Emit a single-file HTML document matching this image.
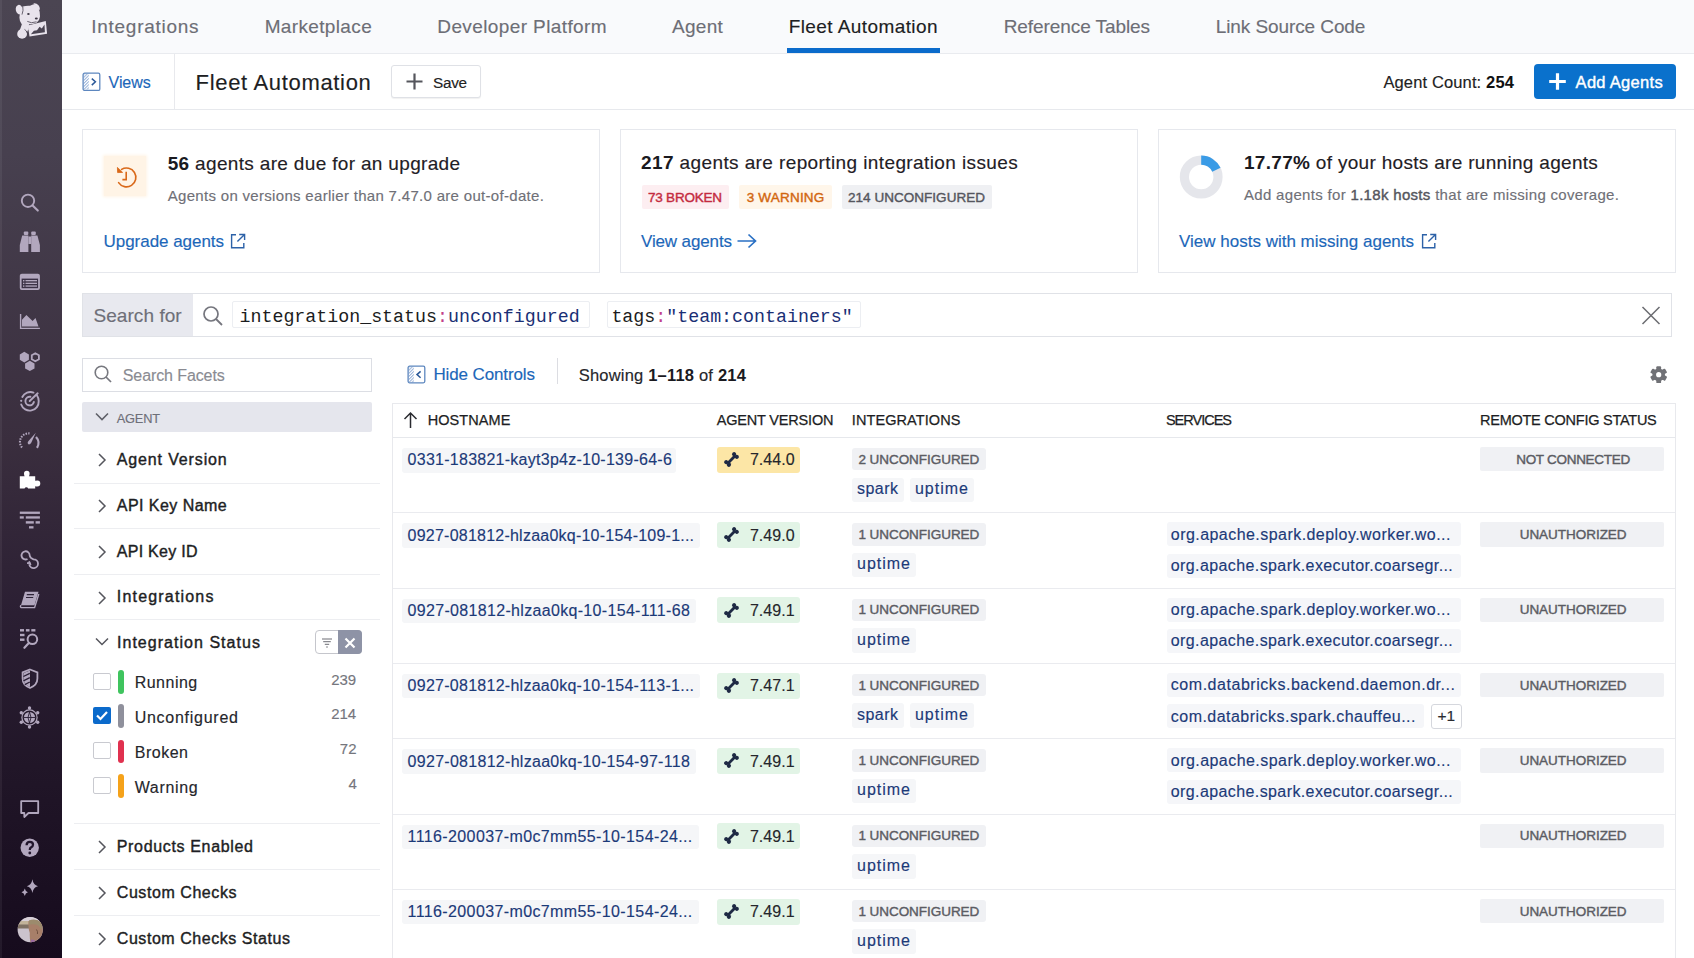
<!DOCTYPE html>
<html><head><meta charset="utf-8"><title>Fleet Automation</title>
<style>
html,body{margin:0;padding:0;width:1694px;height:958px;overflow:hidden;background:#fff;font-family:"Liberation Sans",sans-serif;}
.t{position:absolute;white-space:nowrap;}
.r{position:absolute;}
</style></head><body>
<div class="r" style="left:62px;top:0px;width:1632px;height:54px;background:#f9fafc;"></div>
<div class="r" style="left:62px;top:53px;width:1632px;height:1.5px;background:#e9ebef;"></div>
<div class="t" style="left:91.2px;top:13.92px;font-size:19px;line-height:25px;font-family:'Liberation Sans', sans-serif;letter-spacing:0.739px;font-weight:400;-webkit-text-stroke:0.15px #6d6e76;color:#6d6e76;">Integrations</div>
<div class="t" style="left:264.7px;top:13.92px;font-size:19px;line-height:25px;font-family:'Liberation Sans', sans-serif;letter-spacing:0.353px;font-weight:400;-webkit-text-stroke:0.15px #6d6e76;color:#6d6e76;">Marketplace</div>
<div class="t" style="left:437.3px;top:13.92px;font-size:19px;line-height:25px;font-family:'Liberation Sans', sans-serif;letter-spacing:0.394px;font-weight:400;-webkit-text-stroke:0.15px #6d6e76;color:#6d6e76;">Developer Platform</div>
<div class="t" style="left:671.9px;top:13.92px;font-size:19px;line-height:25px;font-family:'Liberation Sans', sans-serif;letter-spacing:0.340px;font-weight:400;-webkit-text-stroke:0.15px #6d6e76;color:#6d6e76;">Agent</div>
<div class="t" style="left:1003.7px;top:13.92px;font-size:19px;line-height:25px;font-family:'Liberation Sans', sans-serif;letter-spacing:-0.079px;font-weight:400;-webkit-text-stroke:0.15px #6d6e76;color:#6d6e76;">Reference Tables</div>
<div class="t" style="left:1215.7px;top:13.92px;font-size:19px;line-height:25px;font-family:'Liberation Sans', sans-serif;letter-spacing:-0.087px;font-weight:400;-webkit-text-stroke:0.15px #6d6e76;color:#6d6e76;">Link Source Code</div>
<div class="t" style="left:788.7px;top:13.92px;font-size:19px;line-height:25px;font-family:'Liberation Sans', sans-serif;letter-spacing:0.416px;font-weight:400;-webkit-text-stroke:0.15px #1d1e23;color:#1d1e23;">Fleet Automation</div>
<div class="r" style="left:787px;top:48px;width:153px;height:5px;background:#0b6bcb;"></div>
<div class="r" style="left:62px;top:54px;width:1632px;height:55px;background:#ffffff;"></div>
<div class="r" style="left:62px;top:108.5px;width:1632px;height:1.2px;background:#e7e9ed;"></div>
<div class="r" style="left:174px;top:54px;width:1px;height:55px;background:#e8e9ed;"></div>
<svg class="r" style="left:82px;top:72px" width="19" height="19" viewBox="0 0 19 19">
<defs><pattern id="hatch" width="2.2" height="2.2" patternUnits="userSpaceOnUse" patternTransform="rotate(45)"><rect width="1.1" height="2.2" fill="#9fb8dc"/></pattern></defs>
<rect x="1.6" y="1.6" width="5.2" height="15.8" fill="url(#hatch)"/>
<rect x="1.1" y="1.2" width="16.7" height="17.2" rx="1.5" fill="none" stroke="#5d87bf" stroke-width="1.3"/>
<path d="M9.8 6.6 L13.4 9.8 L9.8 13.1" fill="none" stroke="#2a5898" stroke-width="1.5"/></svg>
<div class="t" style="left:108.6px;top:71.96px;font-size:16px;line-height:21px;font-family:'Liberation Sans', sans-serif;letter-spacing:-0.080px;font-weight:400;-webkit-text-stroke:0.15px #1c67b9;color:#1c67b9;">Views</div>
<div class="t" style="left:195.6px;top:67.88px;font-size:22px;line-height:29px;font-family:'Liberation Sans', sans-serif;letter-spacing:0.675px;font-weight:400;-webkit-text-stroke:0.15px #1d1e23;color:#1d1e23;">Fleet Automation</div>
<div class="r" style="left:391px;top:64.5px;width:90px;height:33.5px;background:#fff;border:1px solid #dfe1e6;border-radius:3px;box-sizing:border-box;box-shadow:0 1px 1px rgba(0,0,0,0.06);"></div>
<svg class="r" style="left:405px;top:72px" width="19" height="19" viewBox="0 0 19 19">
<path d="M9.5 1.5 V17.5 M1.5 9.5 H17.5" stroke="#55565d" stroke-width="2.2"/></svg>
<div class="t" style="left:433.0px;top:72.70px;font-size:15.3px;line-height:20px;font-family:'Liberation Sans', sans-serif;letter-spacing:-0.286px;font-weight:400;-webkit-text-stroke:0.15px #222;color:#222;">Save</div>
<div class="t" style="left:1383.4px;top:71.78px;font-size:16.5px;line-height:21px;font-family:'Liberation Sans', sans-serif;letter-spacing:0.136px;"><span style="font-weight:400;-webkit-text-stroke:0.15px #222;color:#222">Agent Count: </span><span style="font-weight:700;color:#111">254</span></div>
<div class="r" style="left:1534px;top:64.3px;width:142px;height:34.3px;background:#0a71cc;border-radius:4px;"></div>
<svg class="r" style="left:1548px;top:72px" width="19" height="19" viewBox="0 0 19 19">
<path d="M9.5 1.2 V17.8 M1.2 9.5 H17.8" stroke="#fff" stroke-width="3.2"/></svg>
<div class="t" style="left:1575.6px;top:71.78px;font-size:16.5px;line-height:21px;font-family:'Liberation Sans', sans-serif;letter-spacing:0.293px;font-weight:400;-webkit-text-stroke:0.4px #ffffff;color:#ffffff;">Add Agents</div>
<div class="r" style="left:82px;top:128.5px;width:518px;height:144px;background:#fff;border:1px solid #e6e8ed;box-sizing:border-box;"></div>
<div class="r" style="left:620px;top:128.5px;width:518px;height:144px;background:#fff;border:1px solid #e6e8ed;box-sizing:border-box;"></div>
<div class="r" style="left:1158px;top:128.5px;width:518px;height:144px;background:#fff;border:1px solid #e6e8ed;box-sizing:border-box;"></div>
<div class="r" style="left:104px;top:156px;width:42px;height:40px;background:#fff4e6;box-shadow:0 0 3px 1px #fff4e6;"></div>
<svg class="r" style="left:112px;top:164px" width="26" height="26" viewBox="0 0 26 26">
<path d="M6.6 18.6 A9.4 9.4 0 1 0 9.6 5.4" fill="none" stroke="#d9691a" stroke-width="1.6" stroke-linecap="round"/>
<path d="M5.4 3.4 L10.6 8.4 L5.6 8.6 Z" fill="#d9691a" stroke="#d9691a" stroke-width="0.8" stroke-linejoin="round"/>
<path d="M14.2 7.8 V15.6 H10.4" fill="none" stroke="#d9691a" stroke-width="1.6"/></svg>
<div class="t" style="left:167.7px;top:150.92px;font-size:19px;line-height:25px;font-family:'Liberation Sans', sans-serif;letter-spacing:0.333px;"><span style="font-weight:700;color:#1a1a1f">56</span><span style="font-weight:400;-webkit-text-stroke:0.15px #1f2025;color:#1f2025"> agents are due for an upgrade</span></div>
<div class="t" style="left:167.7px;top:185.80px;font-size:15px;line-height:20px;font-family:'Liberation Sans', sans-serif;letter-spacing:0.311px;font-weight:400;-webkit-text-stroke:0.15px #6f7077;color:#6f7077;">Agents on versions earlier than 7.47.0 are out-of-date.</div>
<div class="t" style="left:103.5px;top:230.91px;font-size:17px;line-height:22px;font-family:'Liberation Sans', sans-serif;letter-spacing:-0.035px;font-weight:400;-webkit-text-stroke:0.15px #1c67b9;color:#1c67b9;">Upgrade agents</div>
<svg class="r" style="left:229px;top:232px" width="18" height="18" viewBox="0 0 18 18">
<path d="M7 2.8 H2.6 V15.8 H14.8 V11" fill="none" stroke="#2d62a8" stroke-width="1.4"/>
<path d="M10.2 2.5 H15.6 V8 M15.3 2.8 L8.4 9.6" fill="none" stroke="#2d62a8" stroke-width="1.4"/></svg>
<div class="t" style="left:641.0px;top:149.92px;font-size:19px;line-height:25px;font-family:'Liberation Sans', sans-serif;letter-spacing:0.395px;"><span style="font-weight:700;color:#1a1a1f">217</span><span style="font-weight:400;-webkit-text-stroke:0.15px #1f2025;color:#1f2025"> agents are reporting integration issues</span></div>
<div class="r" style="left:641.8px;top:185px;width:87px;height:24px;background:#fdeef1;border-radius:2px;"></div>
<div class="t" style="left:648.0px;top:188.82px;font-size:13.5px;line-height:18px;font-family:'Liberation Sans', sans-serif;letter-spacing:-0.223px;font-weight:400;-webkit-text-stroke:0.4px #c42a3f;color:#c42a3f;">73 BROKEN</div>
<div class="r" style="left:738.8px;top:185px;width:93px;height:24px;background:#fff6ea;border-radius:2px;"></div>
<div class="t" style="left:746.7px;top:188.82px;font-size:13.5px;line-height:18px;font-family:'Liberation Sans', sans-serif;letter-spacing:0.200px;font-weight:400;-webkit-text-stroke:0.4px #d2660f;color:#d2660f;">3 WARNING</div>
<div class="r" style="left:841.9px;top:185px;width:150px;height:24px;background:#eff0f3;border-radius:2px;"></div>
<div class="t" style="left:848.0px;top:188.82px;font-size:13.5px;line-height:18px;font-family:'Liberation Sans', sans-serif;letter-spacing:0.030px;font-weight:400;-webkit-text-stroke:0.4px #55565e;color:#55565e;">214 UNCONFIGURED</div>
<div class="t" style="left:641.0px;top:230.91px;font-size:17px;line-height:22px;font-family:'Liberation Sans', sans-serif;letter-spacing:-0.130px;font-weight:400;-webkit-text-stroke:0.15px #1c67b9;color:#1c67b9;">View agents</div>
<svg class="r" style="left:736px;top:232px" width="22" height="18" viewBox="0 0 22 18">
<path d="M1.5 9 H19.5 M12.5 2.5 L19.5 9 L12.5 15.5" fill="none" stroke="#2a70c4" stroke-width="1.7"/></svg>
<svg class="r" style="left:1177px;top:154px" width="48" height="48" viewBox="0 0 48 48">
<circle cx="24.2" cy="23" r="16.8" fill="none" stroke="#e5e6eb" stroke-width="9.2"/>
<path d="M24.2 6.2 A16.8 16.8 0 0 1 39.4 15.8" fill="none" stroke="#3a9be6" stroke-width="9.2"/></svg>
<div class="t" style="left:1244.0px;top:149.92px;font-size:19px;line-height:25px;font-family:'Liberation Sans', sans-serif;letter-spacing:0.306px;"><span style="font-weight:700;color:#1a1a1f">17.77%</span><span style="font-weight:400;-webkit-text-stroke:0.15px #1f2025;color:#1f2025"> of your hosts are running agents</span></div>
<div class="t" style="left:1244.0px;top:185.30px;font-size:15px;line-height:20px;font-family:'Liberation Sans', sans-serif;letter-spacing:0.315px;"><span style="font-weight:400;-webkit-text-stroke:0.15px #6f7077;color:#6f7077">Add agents for </span><span style="font-weight:400;-webkit-text-stroke:0.4px #55565d;color:#55565d">1.18k hosts</span><span style="font-weight:400;-webkit-text-stroke:0.15px #6f7077;color:#6f7077"> that are missing coverage.</span></div>
<div class="t" style="left:1179.0px;top:230.91px;font-size:17px;line-height:22px;font-family:'Liberation Sans', sans-serif;letter-spacing:0.002px;font-weight:400;-webkit-text-stroke:0.15px #1c67b9;color:#1c67b9;">View hosts with missing agents</div>
<svg class="r" style="left:1420px;top:232px" width="18" height="18" viewBox="0 0 18 18">
<path d="M7 2.8 H2.6 V15.8 H14.8 V11" fill="none" stroke="#2d62a8" stroke-width="1.4"/>
<path d="M10.2 2.5 H15.6 V8 M15.3 2.8 L8.4 9.6" fill="none" stroke="#2d62a8" stroke-width="1.4"/></svg>
<div class="r" style="left:82px;top:293px;width:1590px;height:44px;background:#fff;border:1px solid #e0e2e7;box-sizing:border-box;"></div>
<div class="r" style="left:83px;top:294px;width:110px;height:42px;background:#e8e9ef;"></div>
<div class="t" style="left:93.4px;top:302.92px;font-size:19px;line-height:25px;font-family:'Liberation Sans', sans-serif;letter-spacing:0.073px;font-weight:400;-webkit-text-stroke:0.15px #6e6f78;color:#6e6f78;">Search for</div>
<svg class="r" style="left:201px;top:304px" width="24" height="24" viewBox="0 0 24 24">
<circle cx="10" cy="10" r="7" fill="none" stroke="#75767e" stroke-width="1.7"/>
<path d="M15 15 L21 21" stroke="#75767e" stroke-width="1.8"/></svg>
<div class="r" style="left:232px;top:301px;width:358px;height:27px;background:#fff;border:1px solid #eceef2;box-sizing:border-box;border-radius:2px;"></div>
<div class="r" style="left:607px;top:301px;width:254px;height:27px;background:#fff;border:1px solid #eceef2;box-sizing:border-box;border-radius:2px;"></div>
<div class="t" style="left:239.5px;top:305.12px;font-size:18.3px;line-height:24px;font-family:'Liberation Mono', monospace;letter-spacing:0.000px;"><span style="font-weight:400;color:#1b1c20">integration_status</span><span style="font-weight:400;color:#c2408a">:</span><span style="font-weight:400;color:#1a2f75">unconfigured</span></div>
<div class="t" style="left:611.4px;top:305.12px;font-size:18.3px;line-height:24px;font-family:'Liberation Mono', monospace;letter-spacing:0.000px;"><span style="font-weight:400;color:#1b1c20">tags</span><span style="font-weight:400;color:#c2408a">:</span><span style="font-weight:400;color:#1a2f75">"team:containers"</span></div>
<svg class="r" style="left:1640px;top:305px" width="21" height="21" viewBox="0 0 21 21">
<path d="M2.5 2 L19.5 19 M19.5 2 L2.5 19" stroke="#6a6b70" stroke-width="1.5"/></svg>
<div class="r" style="left:82px;top:357.5px;width:290px;height:34px;background:#fff;border:1px solid #dcdee4;box-sizing:border-box;"></div>
<svg class="r" style="left:93px;top:364px" width="20" height="20" viewBox="0 0 20 20">
<circle cx="8.5" cy="8.5" r="6.3" fill="none" stroke="#77787f" stroke-width="1.6"/>
<path d="M13 13 L18 18" stroke="#77787f" stroke-width="1.7"/></svg>
<div class="t" style="left:122.8px;top:365.46px;font-size:16px;line-height:21px;font-family:'Liberation Sans', sans-serif;letter-spacing:-0.102px;font-weight:400;-webkit-text-stroke:0.15px #8a8b92;color:#8a8b92;">Search Facets</div>
<div class="r" style="left:82px;top:402px;width:290px;height:30px;background:#e5e6ed;border-radius:2px;"></div>
<svg class="r" style="left:94px;top:410px" width="16" height="14" viewBox="0 0 16 14">
<path d="M2 3.5 L8 9.5 L14 3.5" fill="none" stroke="#5f6068" stroke-width="1.6"/></svg>
<div class="t" style="left:116.8px;top:409.56px;font-size:12.8px;line-height:17px;font-family:'Liberation Sans', sans-serif;letter-spacing:-0.216px;font-weight:400;-webkit-text-stroke:0.15px #6e6f78;color:#6e6f78;">AGENT</div>
<svg class="r" style="left:95px;top:452px" width="14" height="16" viewBox="0 0 14 16">
<path d="M4 2 L10 8 L4 14" fill="none" stroke="#55565d" stroke-width="1.5"/></svg>
<div class="t" style="left:116.8px;top:448.96px;font-size:16px;line-height:21px;font-family:'Liberation Sans', sans-serif;letter-spacing:0.858px;font-weight:400;-webkit-text-stroke:0.4px #1d1e23;color:#1d1e23;">Agent Version</div>
<svg class="r" style="left:95px;top:498.3px" width="14" height="16" viewBox="0 0 14 16">
<path d="M4 2 L10 8 L4 14" fill="none" stroke="#55565d" stroke-width="1.5"/></svg>
<div class="t" style="left:116.8px;top:495.26px;font-size:16px;line-height:21px;font-family:'Liberation Sans', sans-serif;letter-spacing:0.456px;font-weight:400;-webkit-text-stroke:0.4px #1d1e23;color:#1d1e23;">API Key Name</div>
<svg class="r" style="left:95px;top:544px" width="14" height="16" viewBox="0 0 14 16">
<path d="M4 2 L10 8 L4 14" fill="none" stroke="#55565d" stroke-width="1.5"/></svg>
<div class="t" style="left:116.8px;top:540.96px;font-size:16px;line-height:21px;font-family:'Liberation Sans', sans-serif;letter-spacing:0.267px;font-weight:400;-webkit-text-stroke:0.4px #1d1e23;color:#1d1e23;">API Key ID</div>
<svg class="r" style="left:95px;top:589.5px" width="14" height="16" viewBox="0 0 14 16">
<path d="M4 2 L10 8 L4 14" fill="none" stroke="#55565d" stroke-width="1.5"/></svg>
<div class="t" style="left:116.8px;top:586.46px;font-size:16px;line-height:21px;font-family:'Liberation Sans', sans-serif;letter-spacing:1.183px;font-weight:400;-webkit-text-stroke:0.4px #1d1e23;color:#1d1e23;">Integrations</div>
<div class="r" style="left:74px;top:482.7px;width:306px;height:1px;background:#edeef1;"></div>
<div class="r" style="left:74px;top:528px;width:306px;height:1px;background:#edeef1;"></div>
<div class="r" style="left:74px;top:573.5px;width:306px;height:1px;background:#edeef1;"></div>
<div class="r" style="left:74px;top:619.4px;width:306px;height:1px;background:#edeef1;"></div>
<svg class="r" style="left:94px;top:635px" width="16" height="14" viewBox="0 0 16 14">
<path d="M2 3.5 L8 9.5 L14 3.5" fill="none" stroke="#55565d" stroke-width="1.5"/></svg>
<div class="t" style="left:117.0px;top:632.16px;font-size:16px;line-height:21px;font-family:'Liberation Sans', sans-serif;letter-spacing:1.028px;font-weight:400;-webkit-text-stroke:0.4px #1d1e23;color:#1d1e23;">Integration Status</div>
<div class="r" style="left:315px;top:629.8px;width:47px;height:24.5px;background:#fff;border:1px solid #c5c6cc;border-radius:4px;box-sizing:border-box;"></div>
<div class="r" style="left:338px;top:629.8px;width:24px;height:24.5px;background:#8e93a6;border-radius:0 4px 4px 0;"></div>
<svg class="r" style="left:320px;top:635px" width="14" height="14" viewBox="0 0 14 14">
<path d="M2 4 H12 M3.2 6.7 H10.8 M4.8 9.3 H9.2 M6.2 12 H7.8" stroke="#6c6d74" stroke-width="1"/></svg>
<svg class="r" style="left:342px;top:634.5px" width="16" height="16" viewBox="0 0 16 16">
<path d="M3.5 3.5 L12.5 12.5 M12.5 3.5 L3.5 12.5" stroke="#fff" stroke-width="2.2"/></svg>
<div class="r" style="left:93px;top:672.5999999999999px;width:17.5px;height:17px;background:#fff;border:1.5px solid #c9cad0;border-radius:2px;box-sizing:border-box;"></div>
<div class="r" style="left:118.4px;top:670.0px;width:5.5px;height:23.5px;background:#3fc45e;border-radius:3px;"></div>
<div class="t" style="left:134.7px;top:672.26px;font-size:16px;line-height:21px;font-family:'Liberation Sans', sans-serif;letter-spacing:0.491px;font-weight:400;-webkit-text-stroke:0.15px #25262b;color:#25262b;">Running</div>
<div class="t" style="left:331.2px;top:669.90px;font-size:15px;line-height:20px;font-family:'Liberation Sans', sans-serif;letter-spacing:0.000px;font-weight:400;-webkit-text-stroke:0.15px #75767d;color:#75767d;">239</div>
<div class="r" style="left:93px;top:707.0px;width:17.5px;height:17px;background:#0b6acb;border-radius:2px;"></div>
<svg class="r" style="left:93px;top:707.0px" width="18" height="17" viewBox="0 0 18 17">
<path d="M4 8.5 L7.5 12 L14 5" fill="none" stroke="#fff" stroke-width="2.2"/></svg>
<div class="r" style="left:118.4px;top:704.4000000000001px;width:5.5px;height:23.5px;background:#8f909c;border-radius:3px;"></div>
<div class="t" style="left:134.7px;top:706.66px;font-size:16px;line-height:21px;font-family:'Liberation Sans', sans-serif;letter-spacing:0.732px;font-weight:400;-webkit-text-stroke:0.15px #25262b;color:#25262b;">Unconfigured</div>
<div class="t" style="left:331.2px;top:704.30px;font-size:15px;line-height:20px;font-family:'Liberation Sans', sans-serif;letter-spacing:0.000px;font-weight:400;-webkit-text-stroke:0.15px #75767d;color:#75767d;">214</div>
<div class="r" style="left:93px;top:742.0999999999999px;width:17.5px;height:17px;background:#fff;border:1.5px solid #c9cad0;border-radius:2px;box-sizing:border-box;"></div>
<div class="r" style="left:118.4px;top:739.5px;width:5.5px;height:23.5px;background:#e0314f;border-radius:3px;"></div>
<div class="t" style="left:134.7px;top:741.76px;font-size:16px;line-height:21px;font-family:'Liberation Sans', sans-serif;letter-spacing:0.516px;font-weight:400;-webkit-text-stroke:0.15px #25262b;color:#25262b;">Broken</div>
<div class="t" style="left:339.8px;top:739.40px;font-size:15px;line-height:20px;font-family:'Liberation Sans', sans-serif;letter-spacing:0.000px;font-weight:400;-webkit-text-stroke:0.15px #75767d;color:#75767d;">72</div>
<div class="r" style="left:93px;top:776.9px;width:17.5px;height:17px;background:#fff;border:1.5px solid #c9cad0;border-radius:2px;box-sizing:border-box;"></div>
<div class="r" style="left:118.4px;top:774.3000000000001px;width:5.5px;height:23.5px;background:#f5a21a;border-radius:3px;"></div>
<div class="t" style="left:134.7px;top:776.56px;font-size:16px;line-height:21px;font-family:'Liberation Sans', sans-serif;letter-spacing:0.661px;font-weight:400;-webkit-text-stroke:0.15px #25262b;color:#25262b;">Warning</div>
<div class="t" style="left:348.4px;top:774.20px;font-size:15px;line-height:20px;font-family:'Liberation Sans', sans-serif;letter-spacing:0.000px;font-weight:400;-webkit-text-stroke:0.15px #75767d;color:#75767d;">4</div>
<div class="r" style="left:74px;top:823.4px;width:306px;height:1px;background:#edeef1;"></div>
<div class="r" style="left:74px;top:869.2px;width:306px;height:1px;background:#edeef1;"></div>
<div class="r" style="left:74px;top:915.3px;width:306px;height:1px;background:#edeef1;"></div>
<svg class="r" style="left:95px;top:839.2px" width="14" height="16" viewBox="0 0 14 16">
<path d="M4 2 L10 8 L4 14" fill="none" stroke="#55565d" stroke-width="1.5"/></svg>
<div class="t" style="left:116.8px;top:836.16px;font-size:16px;line-height:21px;font-family:'Liberation Sans', sans-serif;letter-spacing:0.654px;font-weight:400;-webkit-text-stroke:0.4px #1d1e23;color:#1d1e23;">Products Enabled</div>
<svg class="r" style="left:95px;top:884.8px" width="14" height="16" viewBox="0 0 14 16">
<path d="M4 2 L10 8 L4 14" fill="none" stroke="#55565d" stroke-width="1.5"/></svg>
<div class="t" style="left:116.8px;top:881.76px;font-size:16px;line-height:21px;font-family:'Liberation Sans', sans-serif;letter-spacing:0.560px;font-weight:400;-webkit-text-stroke:0.4px #1d1e23;color:#1d1e23;">Custom Checks</div>
<svg class="r" style="left:95px;top:930.8px" width="14" height="16" viewBox="0 0 14 16">
<path d="M4 2 L10 8 L4 14" fill="none" stroke="#55565d" stroke-width="1.5"/></svg>
<div class="t" style="left:116.8px;top:927.76px;font-size:16px;line-height:21px;font-family:'Liberation Sans', sans-serif;letter-spacing:0.546px;font-weight:400;-webkit-text-stroke:0.4px #1d1e23;color:#1d1e23;">Custom Checks Status</div>
<svg class="r" style="left:406.5px;top:365px" width="19" height="19" viewBox="0 0 19 19">
<rect x="1.6" y="1.6" width="5.2" height="15.8" fill="url(#hatch)"/>
<rect x="1.1" y="1.2" width="16.7" height="16.6" rx="1.5" fill="none" stroke="#5d87bf" stroke-width="1.3"/>
<path d="M13.6 6.4 L10 9.6 L13.6 12.8" fill="none" stroke="#2a5898" stroke-width="1.5"/></svg>
<div class="t" style="left:433.4px;top:364.11px;font-size:17px;line-height:22px;font-family:'Liberation Sans', sans-serif;letter-spacing:-0.115px;font-weight:400;-webkit-text-stroke:0.15px #1c67b9;color:#1c67b9;">Hide Controls</div>
<div class="r" style="left:557px;top:358px;width:1px;height:26px;background:#dcdde2;"></div>
<div class="t" style="left:578.7px;top:364.58px;font-size:16.5px;line-height:21px;font-family:'Liberation Sans', sans-serif;letter-spacing:0.203px;"><span style="font-weight:400;-webkit-text-stroke:0.15px #25262b;color:#25262b">Showing </span><span style="font-weight:700;color:#1a1a1f">1–118</span><span style="font-weight:400;-webkit-text-stroke:0.15px #25262b;color:#25262b"> of </span><span style="font-weight:700;color:#1a1a1f">214</span></div>
<svg class="r" style="left:1650px;top:365.8px" width="17.4" height="17.4" viewBox="0 0 17.4 17.4">
<g fill="#707176"><rect x="6.3" y="0.2" width="4.8" height="17" rx="1" transform="rotate(0 8.7 8.7)"/><rect x="6.3" y="0.2" width="4.8" height="17" rx="1" transform="rotate(60 8.7 8.7)"/><rect x="6.3" y="0.2" width="4.8" height="17" rx="1" transform="rotate(120 8.7 8.7)"/><circle cx="8.7" cy="8.7" r="6.3"/></g><circle cx="8.7" cy="8.7" r="2.6" fill="#fff"/></svg>
<div class="r" style="left:392px;top:402.5px;width:1283.5px;height:556px;background:#fff;border:1px solid #e8e9ed;border-bottom:none;box-sizing:border-box;"></div>
<div class="r" style="left:393px;top:437px;width:1282px;height:1px;background:#e6e8ec;"></div>
<svg class="r" style="left:402px;top:411px" width="17" height="18" viewBox="0 0 17 18">
<path d="M8.5 2 V17 M2.5 8 L8.5 2 L14.5 8" fill="none" stroke="#2a2b30" stroke-width="1.5"/></svg>
<div class="t" style="left:427.7px;top:410.98px;font-size:14.5px;line-height:19px;font-family:'Liberation Sans', sans-serif;letter-spacing:0.075px;font-weight:400;-webkit-text-stroke:0.25px #1d1e23;color:#1d1e23;">HOSTNAME</div>
<div class="t" style="left:716.7px;top:410.98px;font-size:14.5px;line-height:19px;font-family:'Liberation Sans', sans-serif;letter-spacing:-0.182px;font-weight:400;-webkit-text-stroke:0.25px #1d1e23;color:#1d1e23;">AGENT VERSION</div>
<div class="t" style="left:851.8px;top:410.98px;font-size:14.5px;line-height:19px;font-family:'Liberation Sans', sans-serif;letter-spacing:0.083px;font-weight:400;-webkit-text-stroke:0.25px #1d1e23;color:#1d1e23;">INTEGRATIONS</div>
<div class="t" style="left:1165.9px;top:410.98px;font-size:14.5px;line-height:19px;font-family:'Liberation Sans', sans-serif;letter-spacing:-0.995px;font-weight:400;-webkit-text-stroke:0.25px #1d1e23;color:#1d1e23;">SERVICES</div>
<div class="t" style="left:1480.0px;top:410.98px;font-size:14.5px;line-height:19px;font-family:'Liberation Sans', sans-serif;letter-spacing:-0.249px;font-weight:400;-webkit-text-stroke:0.25px #1d1e23;color:#1d1e23;">REMOTE CONFIG STATUS</div>
<div class="r" style="left:401.9px;top:448.0px;width:274.30000000000007px;height:24.5px;background:#f5f6f8;border-radius:3px;"></div>
<div class="t" style="left:407.6px;top:449.26px;font-size:16px;line-height:21px;font-family:'Liberation Sans', sans-serif;letter-spacing:0.259px;font-weight:400;-webkit-text-stroke:0.15px #1c3a78;color:#1c3a78;">0331-183821-kayt3p4z-10-139-64-6</div>
<div class="r" style="left:716.7px;top:446.8px;width:83.3px;height:26px;background:#fce6a6;border-radius:3px;"></div>
<svg class="r" style="left:721.5px;top:450.0px" width="19" height="19" viewBox="0 0 19 19">
<g transform="rotate(-45 9.5 9.5)" fill="#1e2944"><rect x="4" y="8.1" width="11" height="2.8"/>
<circle cx="3.9" cy="7.6" r="2.1"/><circle cx="3.9" cy="11.4" r="2.1"/>
<circle cx="15.1" cy="7.6" r="2.1"/><circle cx="15.1" cy="11.4" r="2.1"/></g></svg>
<div class="t" style="left:749.9px;top:449.46px;font-size:16px;line-height:21px;font-family:'Liberation Sans', sans-serif;letter-spacing:0.034px;font-weight:400;-webkit-text-stroke:0.15px #25262b;color:#25262b;">7.44.0</div>
<div class="r" style="left:852.3px;top:447.9px;width:133.4px;height:22.6px;background:#f0f1f4;border-radius:3px;"></div>
<div class="t" style="left:858.4px;top:450.82px;font-size:13.5px;line-height:18px;font-family:'Liberation Sans', sans-serif;letter-spacing:-0.047px;font-weight:400;-webkit-text-stroke:0.4px #5b5c63;color:#5b5c63;">2 UNCONFIGURED</div>
<div class="r" style="left:852.3px;top:477.5px;width:51.4px;height:24.5px;background:#f5f6f8;border-radius:3px;"></div>
<div class="t" style="left:857.1px;top:478.06px;font-size:16px;line-height:21px;font-family:'Liberation Sans', sans-serif;letter-spacing:0.440px;font-weight:400;-webkit-text-stroke:0.15px #1c3a78;color:#1c3a78;">spark</div>
<div class="r" style="left:910.1999999999999px;top:477.5px;width:63.4px;height:24.5px;background:#f5f6f8;border-radius:3px;"></div>
<div class="t" style="left:915.0px;top:478.06px;font-size:16px;line-height:21px;font-family:'Liberation Sans', sans-serif;letter-spacing:0.967px;font-weight:400;-webkit-text-stroke:0.15px #1c3a78;color:#1c3a78;">uptime</div>
<div class="r" style="left:1480.4px;top:446.9px;width:184px;height:24.6px;background:#f0f1f4;border-radius:2px;"></div>
<div class="t" style="left:1516.2px;top:450.82px;font-size:13.5px;line-height:18px;font-family:'Liberation Sans', sans-serif;letter-spacing:-0.292px;font-weight:400;-webkit-text-stroke:0.4px #5b5c63;color:#5b5c63;">NOT CONNECTED</div>
<div class="r" style="left:393px;top:512px;width:1282px;height:1px;background:#eaebef;"></div>
<div class="r" style="left:401.9px;top:523.33px;width:297.80000000000007px;height:24.5px;background:#f5f6f8;border-radius:3px;"></div>
<div class="t" style="left:407.6px;top:524.59px;font-size:16px;line-height:21px;font-family:'Liberation Sans', sans-serif;letter-spacing:0.230px;font-weight:400;-webkit-text-stroke:0.15px #1c3a78;color:#1c3a78;">0927-081812-hlzaa0kq-10-154-109-1...</div>
<div class="r" style="left:716.7px;top:522.13px;width:83.3px;height:26px;background:#e2f4e6;border-radius:3px;"></div>
<svg class="r" style="left:721.5px;top:525.33px" width="19" height="19" viewBox="0 0 19 19">
<g transform="rotate(-45 9.5 9.5)" fill="#1e2944"><rect x="4" y="8.1" width="11" height="2.8"/>
<circle cx="3.9" cy="7.6" r="2.1"/><circle cx="3.9" cy="11.4" r="2.1"/>
<circle cx="15.1" cy="7.6" r="2.1"/><circle cx="15.1" cy="11.4" r="2.1"/></g></svg>
<div class="t" style="left:749.9px;top:524.79px;font-size:16px;line-height:21px;font-family:'Liberation Sans', sans-serif;letter-spacing:0.034px;font-weight:400;-webkit-text-stroke:0.15px #25262b;color:#25262b;">7.49.0</div>
<div class="r" style="left:852.3px;top:523.23px;width:133.4px;height:22.6px;background:#f0f1f4;border-radius:3px;"></div>
<div class="t" style="left:858.4px;top:526.15px;font-size:13.5px;line-height:18px;font-family:'Liberation Sans', sans-serif;letter-spacing:-0.047px;font-weight:400;-webkit-text-stroke:0.4px #5b5c63;color:#5b5c63;">1 UNCONFIGURED</div>
<div class="r" style="left:852.3px;top:552.83px;width:63.4px;height:24.5px;background:#f5f6f8;border-radius:3px;"></div>
<div class="t" style="left:857.1px;top:553.39px;font-size:16px;line-height:21px;font-family:'Liberation Sans', sans-serif;letter-spacing:0.967px;font-weight:400;-webkit-text-stroke:0.15px #1c3a78;color:#1c3a78;">uptime</div>
<div class="r" style="left:1166.6px;top:522.4300000000001px;width:294.5px;height:23.8px;background:#f5f6f9;border-radius:3px;"></div>
<div class="t" style="left:1170.8px;top:523.79px;font-size:16px;line-height:21px;font-family:'Liberation Sans', sans-serif;letter-spacing:0.450px;font-weight:400;-webkit-text-stroke:0.15px #1c3a78;color:#1c3a78;">org.apache.spark.deploy.worker.wo...</div>
<div class="r" style="left:1166.6px;top:553.73px;width:294.5px;height:23.8px;background:#f5f6f9;border-radius:3px;"></div>
<div class="t" style="left:1170.8px;top:555.09px;font-size:16px;line-height:21px;font-family:'Liberation Sans', sans-serif;letter-spacing:0.397px;font-weight:400;-webkit-text-stroke:0.15px #1c3a78;color:#1c3a78;">org.apache.spark.executor.coarsegr...</div>
<div class="r" style="left:1480.4px;top:522.23px;width:184px;height:24.6px;background:#f0f1f4;border-radius:2px;"></div>
<div class="t" style="left:1519.7px;top:526.15px;font-size:13.5px;line-height:18px;font-family:'Liberation Sans', sans-serif;letter-spacing:-0.032px;font-weight:400;-webkit-text-stroke:0.4px #5b5c63;color:#5b5c63;">UNAUTHORIZED</div>
<div class="r" style="left:393px;top:588px;width:1282px;height:1px;background:#eaebef;"></div>
<div class="r" style="left:401.9px;top:598.66px;width:294.1px;height:24.5px;background:#f5f6f8;border-radius:3px;"></div>
<div class="t" style="left:407.6px;top:599.92px;font-size:16px;line-height:21px;font-family:'Liberation Sans', sans-serif;letter-spacing:0.321px;font-weight:400;-webkit-text-stroke:0.15px #1c3a78;color:#1c3a78;">0927-081812-hlzaa0kq-10-154-111-68</div>
<div class="r" style="left:716.7px;top:597.4599999999999px;width:83.3px;height:26px;background:#e2f4e6;border-radius:3px;"></div>
<svg class="r" style="left:721.5px;top:600.66px" width="19" height="19" viewBox="0 0 19 19">
<g transform="rotate(-45 9.5 9.5)" fill="#1e2944"><rect x="4" y="8.1" width="11" height="2.8"/>
<circle cx="3.9" cy="7.6" r="2.1"/><circle cx="3.9" cy="11.4" r="2.1"/>
<circle cx="15.1" cy="7.6" r="2.1"/><circle cx="15.1" cy="11.4" r="2.1"/></g></svg>
<div class="t" style="left:749.9px;top:600.12px;font-size:16px;line-height:21px;font-family:'Liberation Sans', sans-serif;letter-spacing:0.034px;font-weight:400;-webkit-text-stroke:0.15px #25262b;color:#25262b;">7.49.1</div>
<div class="r" style="left:852.3px;top:598.56px;width:133.4px;height:22.6px;background:#f0f1f4;border-radius:3px;"></div>
<div class="t" style="left:858.4px;top:601.48px;font-size:13.5px;line-height:18px;font-family:'Liberation Sans', sans-serif;letter-spacing:-0.047px;font-weight:400;-webkit-text-stroke:0.4px #5b5c63;color:#5b5c63;">1 UNCONFIGURED</div>
<div class="r" style="left:852.3px;top:628.16px;width:63.4px;height:24.5px;background:#f5f6f8;border-radius:3px;"></div>
<div class="t" style="left:857.1px;top:628.72px;font-size:16px;line-height:21px;font-family:'Liberation Sans', sans-serif;letter-spacing:0.967px;font-weight:400;-webkit-text-stroke:0.15px #1c3a78;color:#1c3a78;">uptime</div>
<div class="r" style="left:1166.6px;top:597.76px;width:294.5px;height:23.8px;background:#f5f6f9;border-radius:3px;"></div>
<div class="t" style="left:1170.8px;top:599.12px;font-size:16px;line-height:21px;font-family:'Liberation Sans', sans-serif;letter-spacing:0.450px;font-weight:400;-webkit-text-stroke:0.15px #1c3a78;color:#1c3a78;">org.apache.spark.deploy.worker.wo...</div>
<div class="r" style="left:1166.6px;top:629.06px;width:294.5px;height:23.8px;background:#f5f6f9;border-radius:3px;"></div>
<div class="t" style="left:1170.8px;top:630.42px;font-size:16px;line-height:21px;font-family:'Liberation Sans', sans-serif;letter-spacing:0.397px;font-weight:400;-webkit-text-stroke:0.15px #1c3a78;color:#1c3a78;">org.apache.spark.executor.coarsegr...</div>
<div class="r" style="left:1480.4px;top:597.56px;width:184px;height:24.6px;background:#f0f1f4;border-radius:2px;"></div>
<div class="t" style="left:1519.7px;top:601.48px;font-size:13.5px;line-height:18px;font-family:'Liberation Sans', sans-serif;letter-spacing:-0.032px;font-weight:400;-webkit-text-stroke:0.4px #5b5c63;color:#5b5c63;">UNAUTHORIZED</div>
<div class="r" style="left:393px;top:663px;width:1282px;height:1px;background:#eaebef;"></div>
<div class="r" style="left:401.9px;top:673.99px;width:297.80000000000007px;height:24.5px;background:#f5f6f8;border-radius:3px;"></div>
<div class="t" style="left:407.6px;top:675.25px;font-size:16px;line-height:21px;font-family:'Liberation Sans', sans-serif;letter-spacing:0.264px;font-weight:400;-webkit-text-stroke:0.15px #1c3a78;color:#1c3a78;">0927-081812-hlzaa0kq-10-154-113-1...</div>
<div class="r" style="left:716.7px;top:672.79px;width:83.3px;height:26px;background:#e2f4e6;border-radius:3px;"></div>
<svg class="r" style="left:721.5px;top:675.99px" width="19" height="19" viewBox="0 0 19 19">
<g transform="rotate(-45 9.5 9.5)" fill="#1e2944"><rect x="4" y="8.1" width="11" height="2.8"/>
<circle cx="3.9" cy="7.6" r="2.1"/><circle cx="3.9" cy="11.4" r="2.1"/>
<circle cx="15.1" cy="7.6" r="2.1"/><circle cx="15.1" cy="11.4" r="2.1"/></g></svg>
<div class="t" style="left:749.9px;top:675.45px;font-size:16px;line-height:21px;font-family:'Liberation Sans', sans-serif;letter-spacing:0.034px;font-weight:400;-webkit-text-stroke:0.15px #25262b;color:#25262b;">7.47.1</div>
<div class="r" style="left:852.3px;top:673.89px;width:133.4px;height:22.6px;background:#f0f1f4;border-radius:3px;"></div>
<div class="t" style="left:858.4px;top:676.81px;font-size:13.5px;line-height:18px;font-family:'Liberation Sans', sans-serif;letter-spacing:-0.047px;font-weight:400;-webkit-text-stroke:0.4px #5b5c63;color:#5b5c63;">1 UNCONFIGURED</div>
<div class="r" style="left:852.3px;top:703.49px;width:51.4px;height:24.5px;background:#f5f6f8;border-radius:3px;"></div>
<div class="t" style="left:857.1px;top:704.05px;font-size:16px;line-height:21px;font-family:'Liberation Sans', sans-serif;letter-spacing:0.440px;font-weight:400;-webkit-text-stroke:0.15px #1c3a78;color:#1c3a78;">spark</div>
<div class="r" style="left:910.1999999999999px;top:703.49px;width:63.4px;height:24.5px;background:#f5f6f8;border-radius:3px;"></div>
<div class="t" style="left:915.0px;top:704.05px;font-size:16px;line-height:21px;font-family:'Liberation Sans', sans-serif;letter-spacing:0.967px;font-weight:400;-webkit-text-stroke:0.15px #1c3a78;color:#1c3a78;">uptime</div>
<div class="r" style="left:1166.6px;top:673.09px;width:294.5px;height:23.8px;background:#f5f6f9;border-radius:3px;"></div>
<div class="t" style="left:1170.8px;top:674.45px;font-size:16px;line-height:21px;font-family:'Liberation Sans', sans-serif;letter-spacing:0.538px;font-weight:400;-webkit-text-stroke:0.15px #1c3a78;color:#1c3a78;">com.databricks.backend.daemon.dr...</div>
<div class="r" style="left:1166.6px;top:704.39px;width:257.70000000000005px;height:23.8px;background:#f5f6f9;border-radius:3px;"></div>
<div class="t" style="left:1170.8px;top:705.75px;font-size:16px;line-height:21px;font-family:'Liberation Sans', sans-serif;letter-spacing:0.470px;font-weight:400;-webkit-text-stroke:0.15px #1c3a78;color:#1c3a78;">com.databricks.spark.chauffeu...</div>
<div class="r" style="left:1430.6px;top:704.49px;width:31.6px;height:24.5px;background:#fff;border:1px solid #d5d7dd;border-radius:3px;box-sizing:border-box;"></div>
<div class="t" style="left:1437.5px;top:706.12px;font-size:15.5px;line-height:20px;font-family:'Liberation Sans', sans-serif;letter-spacing:-0.172px;font-weight:400;-webkit-text-stroke:0.15px #2a2b30;color:#2a2b30;">+1</div>
<div class="r" style="left:1480.4px;top:672.89px;width:184px;height:24.6px;background:#f0f1f4;border-radius:2px;"></div>
<div class="t" style="left:1519.7px;top:676.81px;font-size:13.5px;line-height:18px;font-family:'Liberation Sans', sans-serif;letter-spacing:-0.032px;font-weight:400;-webkit-text-stroke:0.4px #5b5c63;color:#5b5c63;">UNAUTHORIZED</div>
<div class="r" style="left:393px;top:738px;width:1282px;height:1px;background:#eaebef;"></div>
<div class="r" style="left:401.9px;top:749.3199999999999px;width:294.1px;height:24.5px;background:#f5f6f8;border-radius:3px;"></div>
<div class="t" style="left:407.6px;top:750.58px;font-size:16px;line-height:21px;font-family:'Liberation Sans', sans-serif;letter-spacing:0.285px;font-weight:400;-webkit-text-stroke:0.15px #1c3a78;color:#1c3a78;">0927-081812-hlzaa0kq-10-154-97-118</div>
<div class="r" style="left:716.7px;top:748.1199999999999px;width:83.3px;height:26px;background:#e2f4e6;border-radius:3px;"></div>
<svg class="r" style="left:721.5px;top:751.3199999999999px" width="19" height="19" viewBox="0 0 19 19">
<g transform="rotate(-45 9.5 9.5)" fill="#1e2944"><rect x="4" y="8.1" width="11" height="2.8"/>
<circle cx="3.9" cy="7.6" r="2.1"/><circle cx="3.9" cy="11.4" r="2.1"/>
<circle cx="15.1" cy="7.6" r="2.1"/><circle cx="15.1" cy="11.4" r="2.1"/></g></svg>
<div class="t" style="left:749.9px;top:750.78px;font-size:16px;line-height:21px;font-family:'Liberation Sans', sans-serif;letter-spacing:0.034px;font-weight:400;-webkit-text-stroke:0.15px #25262b;color:#25262b;">7.49.1</div>
<div class="r" style="left:852.3px;top:749.2199999999999px;width:133.4px;height:22.6px;background:#f0f1f4;border-radius:3px;"></div>
<div class="t" style="left:858.4px;top:752.14px;font-size:13.5px;line-height:18px;font-family:'Liberation Sans', sans-serif;letter-spacing:-0.047px;font-weight:400;-webkit-text-stroke:0.4px #5b5c63;color:#5b5c63;">1 UNCONFIGURED</div>
<div class="r" style="left:852.3px;top:778.8199999999999px;width:63.4px;height:24.5px;background:#f5f6f8;border-radius:3px;"></div>
<div class="t" style="left:857.1px;top:779.38px;font-size:16px;line-height:21px;font-family:'Liberation Sans', sans-serif;letter-spacing:0.967px;font-weight:400;-webkit-text-stroke:0.15px #1c3a78;color:#1c3a78;">uptime</div>
<div class="r" style="left:1166.6px;top:748.42px;width:294.5px;height:23.8px;background:#f5f6f9;border-radius:3px;"></div>
<div class="t" style="left:1170.8px;top:749.78px;font-size:16px;line-height:21px;font-family:'Liberation Sans', sans-serif;letter-spacing:0.450px;font-weight:400;-webkit-text-stroke:0.15px #1c3a78;color:#1c3a78;">org.apache.spark.deploy.worker.wo...</div>
<div class="r" style="left:1166.6px;top:779.7199999999999px;width:294.5px;height:23.8px;background:#f5f6f9;border-radius:3px;"></div>
<div class="t" style="left:1170.8px;top:781.08px;font-size:16px;line-height:21px;font-family:'Liberation Sans', sans-serif;letter-spacing:0.397px;font-weight:400;-webkit-text-stroke:0.15px #1c3a78;color:#1c3a78;">org.apache.spark.executor.coarsegr...</div>
<div class="r" style="left:1480.4px;top:748.2199999999999px;width:184px;height:24.6px;background:#f0f1f4;border-radius:2px;"></div>
<div class="t" style="left:1519.7px;top:752.14px;font-size:13.5px;line-height:18px;font-family:'Liberation Sans', sans-serif;letter-spacing:-0.032px;font-weight:400;-webkit-text-stroke:0.4px #5b5c63;color:#5b5c63;">UNAUTHORIZED</div>
<div class="r" style="left:393px;top:814px;width:1282px;height:1px;background:#eaebef;"></div>
<div class="r" style="left:401.9px;top:824.65px;width:297.1px;height:24.5px;background:#f5f6f8;border-radius:3px;"></div>
<div class="t" style="left:407.6px;top:825.91px;font-size:16px;line-height:21px;font-family:'Liberation Sans', sans-serif;letter-spacing:0.383px;font-weight:400;-webkit-text-stroke:0.15px #1c3a78;color:#1c3a78;">1116-200037-m0c7mm55-10-154-24...</div>
<div class="r" style="left:716.7px;top:823.4499999999999px;width:83.3px;height:26px;background:#e2f4e6;border-radius:3px;"></div>
<svg class="r" style="left:721.5px;top:826.65px" width="19" height="19" viewBox="0 0 19 19">
<g transform="rotate(-45 9.5 9.5)" fill="#1e2944"><rect x="4" y="8.1" width="11" height="2.8"/>
<circle cx="3.9" cy="7.6" r="2.1"/><circle cx="3.9" cy="11.4" r="2.1"/>
<circle cx="15.1" cy="7.6" r="2.1"/><circle cx="15.1" cy="11.4" r="2.1"/></g></svg>
<div class="t" style="left:749.9px;top:826.11px;font-size:16px;line-height:21px;font-family:'Liberation Sans', sans-serif;letter-spacing:0.034px;font-weight:400;-webkit-text-stroke:0.15px #25262b;color:#25262b;">7.49.1</div>
<div class="r" style="left:852.3px;top:824.55px;width:133.4px;height:22.6px;background:#f0f1f4;border-radius:3px;"></div>
<div class="t" style="left:858.4px;top:827.47px;font-size:13.5px;line-height:18px;font-family:'Liberation Sans', sans-serif;letter-spacing:-0.047px;font-weight:400;-webkit-text-stroke:0.4px #5b5c63;color:#5b5c63;">1 UNCONFIGURED</div>
<div class="r" style="left:852.3px;top:854.15px;width:63.4px;height:24.5px;background:#f5f6f8;border-radius:3px;"></div>
<div class="t" style="left:857.1px;top:854.71px;font-size:16px;line-height:21px;font-family:'Liberation Sans', sans-serif;letter-spacing:0.967px;font-weight:400;-webkit-text-stroke:0.15px #1c3a78;color:#1c3a78;">uptime</div>
<div class="r" style="left:1480.4px;top:823.55px;width:184px;height:24.6px;background:#f0f1f4;border-radius:2px;"></div>
<div class="t" style="left:1519.7px;top:827.47px;font-size:13.5px;line-height:18px;font-family:'Liberation Sans', sans-serif;letter-spacing:-0.032px;font-weight:400;-webkit-text-stroke:0.4px #5b5c63;color:#5b5c63;">UNAUTHORIZED</div>
<div class="r" style="left:393px;top:889px;width:1282px;height:1px;background:#eaebef;"></div>
<div class="r" style="left:401.9px;top:899.98px;width:297.1px;height:24.5px;background:#f5f6f8;border-radius:3px;"></div>
<div class="t" style="left:407.6px;top:901.24px;font-size:16px;line-height:21px;font-family:'Liberation Sans', sans-serif;letter-spacing:0.383px;font-weight:400;-webkit-text-stroke:0.15px #1c3a78;color:#1c3a78;">1116-200037-m0c7mm55-10-154-24...</div>
<div class="r" style="left:716.7px;top:898.78px;width:83.3px;height:26px;background:#e2f4e6;border-radius:3px;"></div>
<svg class="r" style="left:721.5px;top:901.98px" width="19" height="19" viewBox="0 0 19 19">
<g transform="rotate(-45 9.5 9.5)" fill="#1e2944"><rect x="4" y="8.1" width="11" height="2.8"/>
<circle cx="3.9" cy="7.6" r="2.1"/><circle cx="3.9" cy="11.4" r="2.1"/>
<circle cx="15.1" cy="7.6" r="2.1"/><circle cx="15.1" cy="11.4" r="2.1"/></g></svg>
<div class="t" style="left:749.9px;top:901.44px;font-size:16px;line-height:21px;font-family:'Liberation Sans', sans-serif;letter-spacing:0.034px;font-weight:400;-webkit-text-stroke:0.15px #25262b;color:#25262b;">7.49.1</div>
<div class="r" style="left:852.3px;top:899.88px;width:133.4px;height:22.6px;background:#f0f1f4;border-radius:3px;"></div>
<div class="t" style="left:858.4px;top:902.80px;font-size:13.5px;line-height:18px;font-family:'Liberation Sans', sans-serif;letter-spacing:-0.047px;font-weight:400;-webkit-text-stroke:0.4px #5b5c63;color:#5b5c63;">1 UNCONFIGURED</div>
<div class="r" style="left:852.3px;top:929.48px;width:63.4px;height:24.5px;background:#f5f6f8;border-radius:3px;"></div>
<div class="t" style="left:857.1px;top:930.04px;font-size:16px;line-height:21px;font-family:'Liberation Sans', sans-serif;letter-spacing:0.967px;font-weight:400;-webkit-text-stroke:0.15px #1c3a78;color:#1c3a78;">uptime</div>
<div class="r" style="left:1480.4px;top:898.88px;width:184px;height:24.6px;background:#f0f1f4;border-radius:2px;"></div>
<div class="t" style="left:1519.7px;top:902.80px;font-size:13.5px;line-height:18px;font-family:'Liberation Sans', sans-serif;letter-spacing:-0.032px;font-weight:400;-webkit-text-stroke:0.4px #5b5c63;color:#5b5c63;">UNAUTHORIZED</div>
<div class="r" style="left:0px;top:0px;width:62px;height:958px;background:linear-gradient(180deg,#4b4552 0%,#47404f 16%,#3a2e3e 46%,#2b1f33 64%,#211628 80%,#160b1d 100%);"></div>
<div class="r" style="left:0px;top:0px;width:1.5px;height:958px;background:rgba(255,255,255,0.06);"></div>
<svg class="r" style="left:0px;top:0px" width="62" height="45" viewBox="0 0 62 45">
<g fill="#e8e3ec">
<path d="M22.5 6.6 Q27 5.3 30 5.8 Q32.5 4.5 34 4.2 L38.5 8 Q40.2 12 40 16.5 Q39.6 20.8 36.6 22.8 Q33 24.5 29 24.2 L28.5 30 L24 30.5 Q23.8 27 22 24.8 Q19.4 21.8 19.4 17.5 Q19.4 15 20.5 13 Z"/>
<ellipse cx="19.3" cy="9.7" rx="3.5" ry="4.9" transform="rotate(-12 19.3 9.7)"/>
<path d="M33.4 3.4 Q36.5 3 38.5 5.2 Q40.3 7.3 40 9.8 Q38.6 9.6 37.6 8.4 Q35.5 6.6 33.4 3.4 Z"/>
<ellipse cx="22.1" cy="33.9" rx="4.9" ry="4.9"/>
<path d="M21.8 24.6 L28.6 26 L27.6 31.5 L19.5 31 Z"/>
</g>
<g fill="none" stroke="#4a4452" stroke-width="0.8">
<path d="M22.8 6.4 Q23.6 10.5 22 14.6"/>
<path d="M27.3 21.4 Q31 23.8 36.5 21.8"/>
<path d="M24.5 29.4 Q26.6 30.6 27.2 32.8"/>
</g>
<g fill="#3d3745"><ellipse cx="28.4" cy="14" rx="1.3" ry="1.1"/><ellipse cx="36.3" cy="18.6" rx="1.5" ry="1"/></g>
<path d="M27.8 25.4 L45.8 21.1 L47.1 33.8 L29.5 36.4 Z" fill="#e8e3ec"/>
<path d="M30.9 34.2 L33.9 30.7 L37 30.3 L39.6 26.8 L41.8 28.5 L44.5 24.6 L44.9 32.2 Z" fill="#4a4452"/>
</svg>
<svg class="r" style="left:0;top:0" width="62" height="958" viewBox="0 0 62 958">
<!-- search -->
<circle cx="28" cy="200.8" r="6.2" fill="none" stroke="#b2a7be" stroke-width="1.9"/>
<path d="M32.6 205.4 L37.8 210.6" stroke="#b2a7be" stroke-width="2.1" stroke-linecap="round"/>
<!-- binoculars -->
<g fill="#b2a7be">
<rect x="23.8" y="231.6" width="4.5" height="3.4" rx="1"/><rect x="31.2" y="231.6" width="4.6" height="3.4" rx="1"/>
<path d="M22.2 235.5 H28.4 V252 H19.8 V245 Z"/><path d="M31.2 235.5 H37.4 L39.9 245 V252 H31.2 Z"/>
<rect x="28.4" y="236.5" width="2.8" height="7.5"/>
</g>
<!-- list card -->
<rect x="19.8" y="273.8" width="20.1" height="16.1" rx="2" fill="#b2a7be"/>
<rect x="21.6" y="278.6" width="16.5" height="9.6" fill="#3b3146"/>
<g fill="#b2a7be"><rect x="23" y="280" width="1.4" height="1.4"/><rect x="23" y="282.7" width="1.4" height="1.4"/><rect x="23" y="285.4" width="1.4" height="1.4"/>
<rect x="25.5" y="280" width="11.5" height="1.3"/><rect x="25.5" y="282.7" width="11.5" height="1.3"/><rect x="25.5" y="285.4" width="11.5" height="1.3"/></g>
<!-- chart -->
<path d="M20.6 314 V328.4 H39.9" fill="none" stroke="#b2a7be" stroke-width="1.4"/>
<path d="M22 326.5 V319.8 L26.4 315.1 L32.6 321 L35.5 318 L38.5 326.5 Z" fill="#b2a7be"/>
<!-- hexagons -->
<g fill="#b2a7be">
<path d="M24.3 351.8 L28.9 354.5 V359.8 L24.3 362.5 L19.8 359.8 V354.5 Z"/>
<path d="M29.8 360.8 L34.5 363.5 V368.4 L29.8 371.1 L25.1 368.4 V363.5 Z"/>
</g>
<path d="M35.3 353.2 L38.9 355.2 V359.2 L35.3 361.2 L31.8 359.2 V355.2 Z" fill="none" stroke="#b2a7be" stroke-width="1.8"/>
<!-- target -->
<g fill="none" stroke="#b2a7be" stroke-width="1.9" stroke-linecap="round">
<path d="M21.2 404.5 A9 9 0 0 0 38.7 401 A9 9 0 0 0 37 395.5"/>
<path d="M22.3 397 A9 9 0 0 1 33.5 392.6"/>
<path d="M33.9 402 A4.3 4.3 0 1 1 30.4 396.8"/>
<path d="M29.7 401 L37.7 393.3"/>
</g>
<circle cx="21.2" cy="400.8" r="1.1" fill="#b2a7be"/>
<!-- gauge -->
<g fill="none" stroke="#b2a7be" stroke-width="2.1" stroke-dasharray="1.5 1.2">
<path d="M22 447.5 A8.6 8.6 0 0 1 29.5 433.4"/>
</g>
<path d="M35.8 432.8 L31 443.3 Q29 445.5 27.8 443.5 Q27.3 442.2 28.5 441 Z" fill="#b2a7be"/>
<path d="M36 437 A8.6 8.6 0 0 1 37 447.8" fill="none" stroke="#b2a7be" stroke-width="2.3"/>
<!-- puzzle active -->
<path fill="#ffffff" d="M19.8 476.2 H24.6 Q24 475.4 24 473.6 A2.8 2.8 0 0 1 29.6 473.6 Q29.6 475.4 29 476.2 H35.2 V480.8 Q36 480.6 37.4 480.6 A2.9 2.9 0 0 1 37.4 486.4 Q36 486.4 35.2 486.2 V488.6 H28.1 A1.8 1.8 0 0 0 24.6 488.6 H19.8 Z"/>
<!-- filter -->
<g fill="#b2a7be">
<rect x="19.8" y="511.6" width="20.1" height="2.3"/>
<rect x="19.8" y="516.3" width="4" height="2.3"/><rect x="25.8" y="516.3" width="14.1" height="2.3"/>
<rect x="25.8" y="521.2" width="8" height="2.4"/><rect x="35.6" y="521.2" width="4.3" height="2.4"/>
<rect x="29" y="526.2" width="4.5" height="2.3"/>
</g>
<!-- loop -->
<g fill="none" stroke="#b2a7be" stroke-width="1.8">
<path d="M27.5 559 A4.1 4.1 0 1 1 29.7 555.5 Q30 558 33.5 559.3 A4.4 4.4 0 1 1 29.3 564.5"/>
</g>
<path d="M27 563.2 L29.6 561.4 L31 564.6 Z" fill="#b2a7be" stroke="#b2a7be" stroke-width="1"/>
<!-- book -->
<path d="M25 591.7 H38.5 L34.5 605.2 H21 Z" fill="#b2a7be"/>
<path d="M21 605.2 Q19.8 606.8 21.2 607.6 H34.6 L38.8 594" fill="none" stroke="#b2a7be" stroke-width="1.4"/>
<path d="M26.8 594.6 H34 M26 597.5 H33.2" stroke="#2f2539" stroke-width="1.2"/>
<!-- search list -->
<g fill="#b2a7be">
<rect x="20" y="629.1" width="4" height="2.4"/><rect x="25.9" y="629.1" width="3.6" height="2.4"/><rect x="31.3" y="629.1" width="4.1" height="2.4"/>
<rect x="20" y="633.8" width="4.5" height="2.4"/><rect x="20" y="638.5" width="4.5" height="2.4"/>
</g>
<circle cx="32.4" cy="639.3" r="4.8" fill="none" stroke="#b2a7be" stroke-width="2"/>
<path d="M28.8 643 L24.4 647.8" stroke="#b2a7be" stroke-width="2.2" stroke-linecap="round"/>
<!-- shield -->
<path d="M30 669.5 L37.4 672.3 V678.5 Q37.4 685 30 688 Q22.6 685 22.6 678.5 V672.3 Z" fill="none" stroke="#b2a7be" stroke-width="1.8"/>
<path d="M30 670.5 V687 Q23.6 684.5 23.6 678.5 V673 Z" fill="#b2a7be"/>
<path d="M23.4 676.5 L29.8 673.3 M23.4 680.8 L29.8 677.6 M24.8 684.6 L29.8 682" stroke="#281d33" stroke-width="1.3"/>
<path d="M31.5 672.5 V685.5 Q35.8 683 35.8 678.5 V673.5 Z" fill="#281d33"/>
<!-- globe -->
<circle cx="29.5" cy="717.5" r="5.6" fill="#b2a7be"/>
<g stroke="#281d33" stroke-width="0.9" fill="none"><path d="M24 717.5 H35 M29.5 712 Q26.5 717.5 29.5 723 Q32.5 717.5 29.5 712"/></g>
<circle cx="29.5" cy="717.5" r="7.6" fill="none" stroke="#b2a7be" stroke-width="1.2"/>
<g fill="#b2a7be"><circle cx="29.5" cy="708" r="1.7"/><circle cx="29.5" cy="727" r="1.7"/><circle cx="21.3" cy="712.8" r="1.7"/><circle cx="37.7" cy="712.8" r="1.7"/><circle cx="21.3" cy="722.2" r="1.7"/><circle cx="37.7" cy="722.2" r="1.7"/></g>
<!-- chat -->
<path d="M21.2 801.2 H38.2 V813 H28.5 L24.3 817 V813 H21.2 Z" fill="none" stroke="#b2a7be" stroke-width="1.8" stroke-linejoin="round"/>
<!-- question -->
<circle cx="29.7" cy="847.7" r="9.2" fill="#b2a7be"/>
<path d="M26.6 845.2 Q26.6 841.8 29.8 841.8 Q33 841.8 33 844.8 Q33 846.6 30.8 847.6 Q29.8 848.2 29.8 850" fill="none" stroke="#21162c" stroke-width="2.3"/>
<circle cx="29.8" cy="853" r="1.4" fill="#21162c"/>
<!-- sparkles -->
<g fill="#b2a7be">
<path d="M32.4 879.3 Q33.2 885 38 886.2 Q33.2 887.4 32.4 893 Q31.6 887.4 26.8 886.2 Q31.6 885 32.4 879.3 Z"/>
<path d="M24.8 888.4 Q25.3 891.3 27.9 892.2 Q25.3 893 24.8 896 Q24.3 893 21.5 892.2 Q24.3 891.3 24.8 888.4 Z"/>
</g>
</svg>
<svg class="r" style="left:16.5px;top:917px" width="26.4" height="26.4" viewBox="0 0 26.4 26.4">
<defs><clipPath id="av"><circle cx="13.2" cy="12.7" r="12.6"/></clipPath></defs>
<g clip-path="url(#av)"><rect width="27" height="27" fill="#cbc3cd"/>
<rect x="0" y="0" width="27" height="4.5" fill="#d8d0d8"/>
<rect x="0" y="4" width="14" height="4.2" fill="#c2b39a"/>
<rect x="0" y="7.5" width="14" height="4" fill="#7f7163"/>
<path d="M11.5 4 Q18 1.5 24 5 Q27 9 26 16 Q24 23 19 26 L13.5 26.4 Q12.5 20 12.8 16 Q11 12 11.5 4 Z" fill="#a77f69"/>
<path d="M12 3.5 Q19 1 24.5 5.5 Q26 10 24.5 13 Q22 8 18.5 7.5 Q14 7 12 8 Z" fill="#9c8b6d"/>
<path d="M19.5 12.5 Q21 14.5 20.5 17" stroke="#6e4e3e" stroke-width="1" fill="none"/>
<path d="M14 22.5 L18 23 L17 27 L13.5 27 Z" fill="#9b6aa0"/>
</g></svg>
</body></html>
